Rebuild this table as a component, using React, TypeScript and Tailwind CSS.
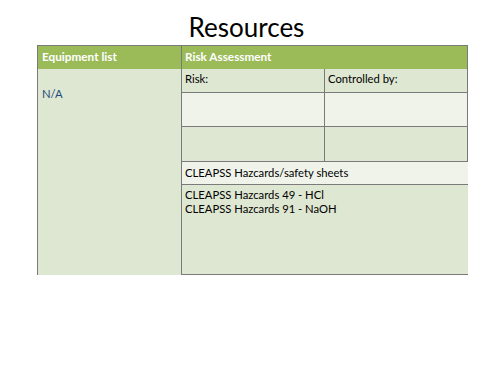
import React from "react";

const font = { fontFamily: 'Lato, "Open Sans", "Liberation Sans", sans-serif' };

export default function App() {
  return (
    <div className="w-[500px] h-[375px] bg-white text-black" style={font}>
      <div className="h-[45px] pt-[14px] pr-[7px] text-center text-[26px] leading-none">Resources</div>
      <div className="ml-[37px] w-[431px] flex flex-col text-[11.25px] leading-[14px]">
        {/* header */}
        <div className="flex h-[24px] bg-[#9BBB59] border-t border-[#7a7a7a] text-white font-bold text-[11.75px]">
          <div className="w-[144px] pl-[4px] pt-[4px] border-l border-[#7a7a7a]">Equipment list</div>
          <div className="flex-1 pl-[3px] pt-[4px] border-l border-r border-[#7a7a7a]">Risk Assessment</div>
        </div>
        {/* body */}
        <div className="flex">
          <div className="w-[144px] h-[206px] bg-[#DEE7D1] border-l border-[#7a7a7a] pl-[4px] pt-[18px] text-[#1F497D]">
            N/A
          </div>
          <div className="flex-1 flex flex-col border-l border-b border-[#7a7a7a]">
            <div className="flex h-[24px] bg-[#DEE7D1] border-b border-r border-[#7a7a7a]">
              <div className="w-[143px] pl-[3px] pt-[3px] border-r border-[#7a7a7a]">Risk:</div>
              <div className="flex-1 pl-[3px] pt-[3px]">Controlled by:</div>
            </div>
            <div className="flex h-[34px] bg-[#EFF3EA] border-b border-r border-[#7a7a7a]">
              <div className="w-[143px] border-r border-[#7a7a7a]"></div>
              <div className="flex-1"></div>
            </div>
            <div className="flex h-[35px] bg-[#DEE7D1] border-b border-r border-[#7a7a7a]">
              <div className="w-[143px] border-r border-[#7a7a7a]"></div>
              <div className="flex-1"></div>
            </div>
            <div className="h-[23px] bg-[#EFF3EA] border-b border-[#7a7a7a] pl-[3px] pt-[4px]">
              CLEAPSS Hazcards/safety sheets
            </div>
            <div className="flex-1 bg-[#DEE7D1] pl-[3px] pt-[3px]">
              <div>CLEAPSS Hazcards 49 - HCl</div>
              <div>CLEAPSS Hazcards 91 - NaOH</div>
            </div>
          </div>
        </div>
      </div>
    </div>
  );
}
